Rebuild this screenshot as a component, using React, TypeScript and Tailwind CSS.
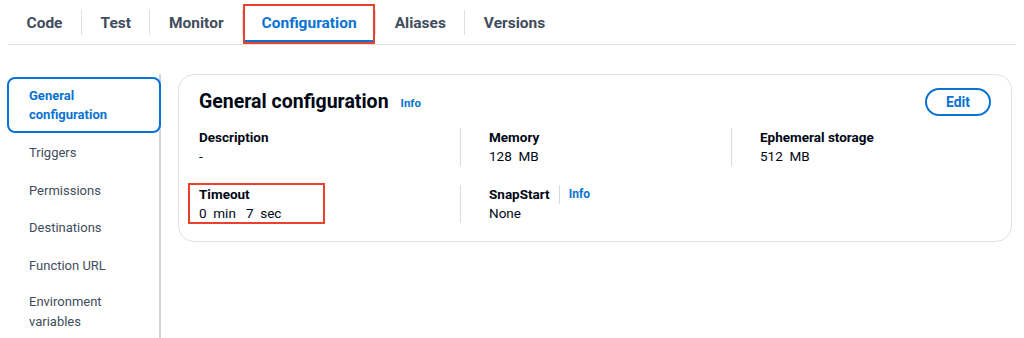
import React from "react";

const tabs = ["Code", "Test", "Monitor", "Configuration", "Aliases", "Versions"];

const sideItems = ["Triggers", "Permissions", "Destinations", "Function URL"];

function Field({ label, value, info = false, first = false }: { label: string; value: string; info?: boolean; first?: boolean }) {
  return (
    <div className={first ? "" : "border-l border-[#d5dbdb] pl-[28px]"}>
      <div className="flex items-center text-[13.5px] font-bold leading-[19px] text-[#000716]">
        {label}
        {info && (
          <>
            <span className="mx-[9px] h-[19px] w-px bg-[#d5dbdb]"></span>
            <span className="text-[12px] text-[#0972d3]">Info</span>
          </>
        )}
      </div>
      <div className="whitespace-pre text-[13.5px] leading-[19px] text-[#000716]">{value}</div>
    </div>
  );
}

export default function App() {
  return (
    <div className="h-[338px] w-[1024px] overflow-hidden bg-white font-['Roboto',sans-serif]">
      {/* tabs */}
      <div className="mx-[8px] flex h-[45px] border-b border-[#e0e0e0] pt-[3px]">
        {tabs.map((t, i) => {
          const active = t === "Configuration";
          return (
            <div key={t} className="flex items-center">
              {i > 0 && <div className="-mt-[3px] h-[25px] w-px bg-[#e0e0e0]"></div>}
              <div className="relative flex h-full items-center px-[18.5px]">
                <span className={"text-[15.5px] font-bold " + (active ? "text-[#0972d3]" : "text-[#414d5c]")}>{t}</span>
                {active && (
                  <>
                    <span className="absolute bottom-[1px] left-[1px] right-[1px] h-[3px] bg-[#0972d3]"></span>
                    <span className="absolute left-0 right-0 top-[1px] bottom-0 border-2 border-[#e8412c]"></span>
                  </>
                )}
              </div>
            </div>
          );
        })}
      </div>

      <div className="flex items-start pt-[29px]">
        {/* side nav */}
        <div className="ml-[7px] w-[154px] shrink-0">
          <div className="relative border-r-2 border-[#d1d5db] pt-[3px]">
            <div className="-mr-[2px] rounded-lg border-2 border-[#0972d3] py-[7px] pl-[20px] text-[13px] font-bold leading-[19px] text-[#0972d3]">
              General
              <br />
              configuration
            </div>
            <div className="flex flex-col">
              {sideItems.map((s) => (
                <div key={s} className="flex h-[37.6px] items-center pl-[22px] text-[13px] text-[#414d5c] first:mt-[1px]">
                  {s}
                </div>
              ))}
              <div className="pl-[22px] pt-[8px] text-[13px] leading-[20px] text-[#414d5c]">
                Environment
                <br />
                variables
              </div>
              <div className="h-[20px]"></div>
            </div>
          </div>
        </div>

        {/* card */}
        <div className="ml-[17px] mr-[12px] flex-1 rounded-[16px] border border-[#e2e2e2] px-[20px] pb-[18px] pt-[13px]">
          <div className="flex h-[28px] items-center justify-between">
            <div className="flex items-center">
              <span className="text-[19.5px] font-bold text-[#000716]">General configuration</span>
              <span className="ml-[12px] mt-[3px] text-[11.5px] font-bold text-[#0972d3]">Info</span>
            </div>
            <button className="h-[28px] w-[66px] rounded-full border-2 border-[#0972d3] text-[14px] font-bold text-[#0972d3]">
              Edit
            </button>
          </div>
          <div className="mt-[12px] grid grid-cols-[261px_271px_1fr] gap-y-[19px]">
            <Field first label="Description" value="-" />
            <Field label="Memory" value="128  MB" />
            <Field label="Ephemeral storage" value="512  MB" />
            <div className="relative">
              <Field first label="Timeout" value="0  min   7  sec" />
              <span className="absolute -left-[11px] -top-[2px] h-[41px] w-[137px] border-2 border-[#e8412c]"></span>
            </div>
            <Field info label="SnapStart" value="None" />
            <div></div>
          </div>
        </div>
      </div>
    </div>
  );
}
